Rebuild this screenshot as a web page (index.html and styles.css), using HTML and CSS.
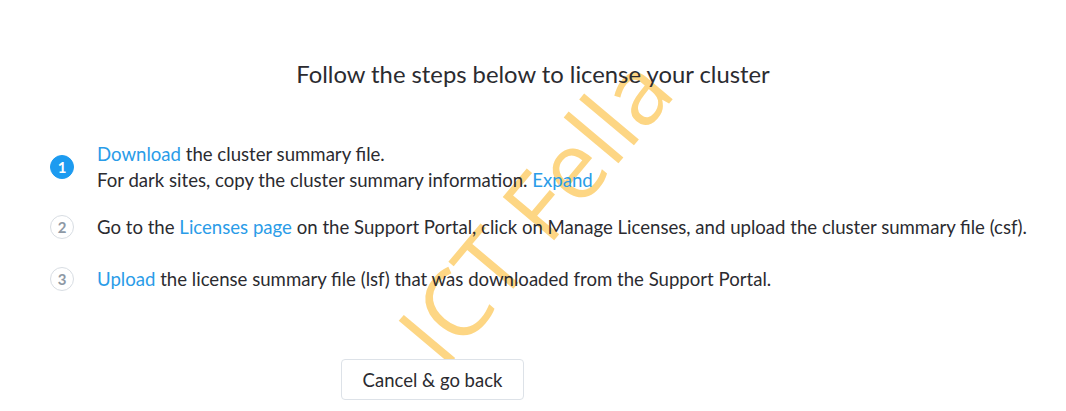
FILE: index.html
```html
<!DOCTYPE html>
<html>
<head>
  <title>License Cluster</title>
  <link rel="stylesheet" href="styles.css">
</head>
<body>
  <div class="page">
    <div class="watermark">ICT Fella</div>

    <h1 class="title">Follow the steps below to license your cluster</h1>

    <ol class="steps">
      <li class="step">
        <span class="num active">1</span>
        <div class="text">
          <div><a href="#">Download</a> the cluster summary file.</div>
          <div>For dark sites, copy the cluster summary information. <a href="#">Expand</a></div>
        </div>
      </li>
      <li class="step">
        <span class="num">2</span>
        <div class="text">
          <div>Go to the <a href="#">Licenses page</a> on the Support Portal, click on Manage Licenses, and upload the cluster summary file (csf).</div>
        </div>
      </li>
      <li class="step last">
        <span class="num">3</span>
        <div class="text">
          <div><a href="#">Upload</a> the license summary file (lsf) that was downloaded from the Support Portal.</div>
        </div>
      </li>
    </ol>

    <div class="footer">
      <button class="btn">Cancel &amp; go back</button>
    </div>
  </div>
</body>
</html>
```

FILE: styles.css
```css
body {
  margin: 0;
  background-color: #ffffff;
  font-family: Lato, "Open Sans", sans-serif;
  color: #2b2b30;
}
.page {
  position: relative;
  height: 411px;
  overflow: hidden;
}
.title {
  position: relative;
  margin: 0;
  padding-top: 60px;
  text-align: center;
  font-size: 23.8px;
  font-weight: 400;
  line-height: 28px;
}
.steps {
  position: relative;
  list-style: none;
  margin: 53px 0 0 0;
  padding: 0 0 0 50px;
  display: flex;
  flex-direction: column;
  gap: 21px;
  font-size: 18.6px;
  line-height: 26px;
}
.step {
  display: flex;
  align-items: center;
  gap: 23px;
}
.step.last {
  margin-top: 5px;
}
.num {
  flex: none;
  width: 22px;
  height: 22px;
  border: 1px solid #d8dde3;
  border-radius: 50%;
  display: flex;
  align-items: center;
  justify-content: center;
  font-size: 15px;
  font-weight: 700;
  color: #8e99a5;
}
.num.active {
  background-color: #1d9bf0;
  border-color: #1d9bf0;
  color: #ffffff;
}
.text a {
  color: #2a9ce8;
  text-decoration: none;
}
.footer {
  position: relative;
  margin-top: 67px;
  padding-left: 341px;
}
.btn {
  width: 183px;
  height: 41px;
  background-color: #ffffff;
  border: 1px solid #dde2e8;
  border-radius: 4px;
  font-family: inherit;
  font-size: 18.5px;
  color: #2b2b30;
}
.watermark {
  position: absolute;
  left: 352px;
  top: 145px;
  font-family: "Open Sans", sans-serif;
  font-weight: 400;
  font-size: 94px;
  color: #fdd684;
  transform: rotate(-50deg);
  white-space: nowrap;
  pointer-events: none;
}
```
